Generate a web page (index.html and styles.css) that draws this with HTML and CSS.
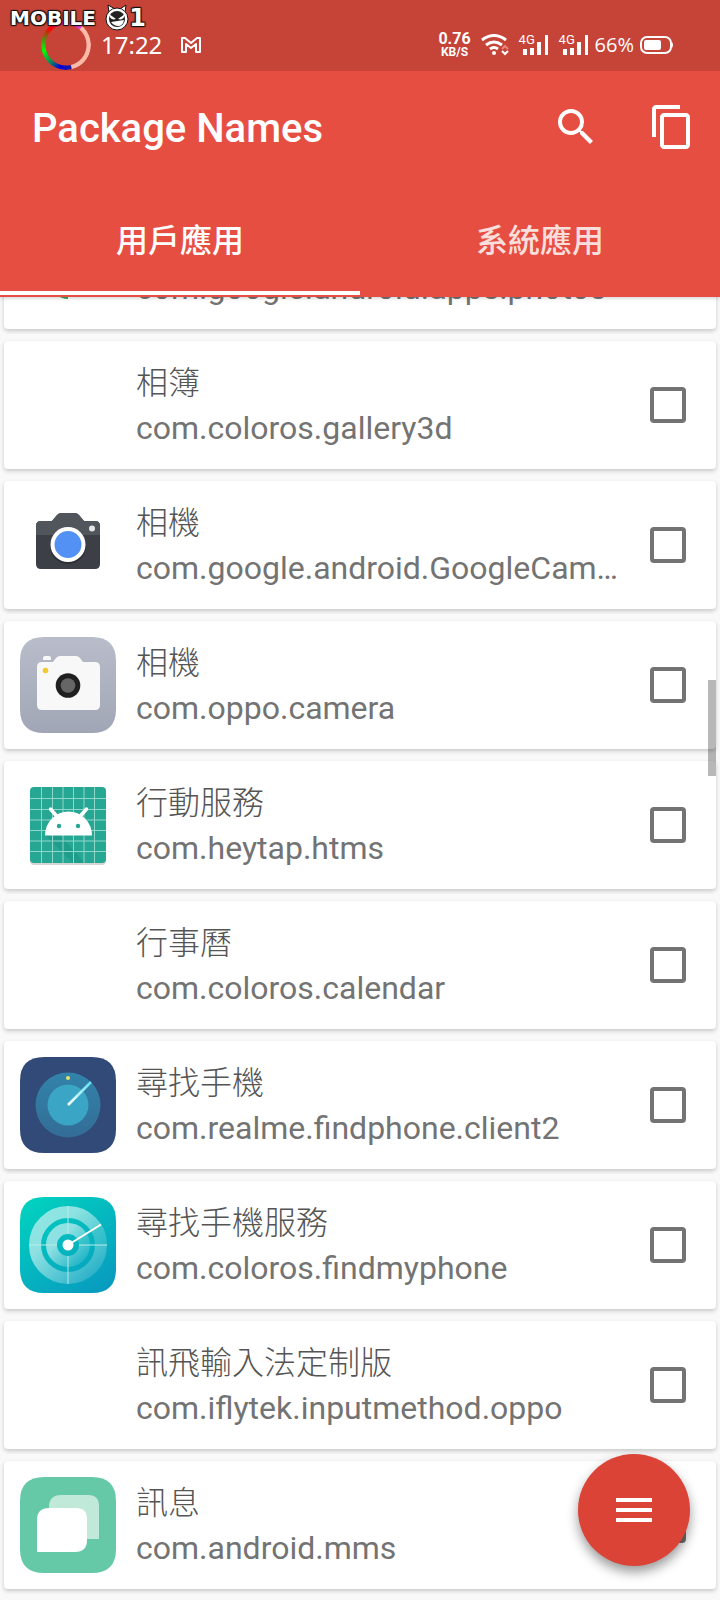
FILE: index.html
```html
<!DOCTYPE html>
<html lang="zh-Hant">
<head>
  <meta charset="UTF-8">
  <meta name="viewport" content="width=device-width, initial-scale=1">
  <title>Package Names</title>
  <link rel="stylesheet" href="styles.css">
</head>
<body>

  <header class="header">
    <div class="status">
      <span class="ring"></span>
      <span class="clock">17:22</span>
      <svg class="mail" width="22" height="18" viewBox="0 0 22 18" fill="none" stroke="#fff" stroke-width="2" stroke-linejoin="round">
        <path d="M2 2h3l6 5 6-5h3v14h-4V8l-5 4-5-4v8H2z"/>
      </svg>

      <div class="status-right">
        <div class="speed"><b>0.76</b><small>KB/S</small></div>
        <svg width="28" height="22" viewBox="0 0 28 22" fill="none" stroke="#fff" stroke-width="3">
          <path d="M1 6q12-9 24 0M5 11q8-6 16 0M9 15q4-3 8 0"/>
          <circle cx="13" cy="19" r="2" fill="#fff" stroke="none"/>
          <path d="M21 15l3-3 3 3" stroke="#e5857c" stroke-width="2"/>
          <path d="M21 17l3 3 3-3" stroke-width="2"/>
        </svg>
        <div class="signal">
          <span>4G</span>
          <svg width="30" height="20" viewBox="0 0 30 20" fill="#fff">
            <path d="M4 14h4v6H4zM11 13h4v7h-4zM18 7h4v13h-4zM26 0h3v20h-3z"/>
          </svg>
        </div>
        <div class="signal">
          <span>4G</span>
          <svg width="30" height="20" viewBox="0 0 30 20" fill="#fff">
            <path d="M4 14h4v6H4zM11 13h4v7h-4zM18 7h4v13h-4zM26 0h3v20h-3z"/>
          </svg>
        </div>
        <div class="battery">
          <span>66%</span>
          <svg width="34" height="20" viewBox="0 0 34 20">
            <rect x="1" y="2" width="30" height="16" rx="6" fill="none" stroke="#fff" stroke-width="2"/>
            <rect x="4" y="5" width="17" height="10" rx="2" fill="#fff"/>
            <path d="M32 7q2 3 0 6z" fill="#fff"/>
          </svg>
        </div>
      </div>

      <div class="watermark">
        <span class="brand">MOBILE</span>
        <svg width="24" height="28" viewBox="0 0 24 28">
          <path d="M4 9L3 1l7 4h5l6-4-1 8z" fill="#fff" stroke="#111" stroke-width="1"/>
          <circle cx="12" cy="15" r="11" fill="#fff" stroke="#111" stroke-width="1"/>
          <circle cx="12" cy="15" r="8" fill="#222"/>
          <path d="M4 10l7 5q-6 2-7-5zM20 10l-7 5q6 2 7-5zM6 18l13-2q-1 6-6 6-4 0-7-4z" fill="#fff"/>
        </svg>
        <span class="one">1</span>
      </div>
    </div>

    <div class="toolbar">
      <h1>Package Names</h1>
      <button type="button" aria-label="搜尋">
        <svg width="48" height="48" viewBox="0 0 24 24" fill="#fff">
          <path d="M15.5 14h-.79l-.28-.27A6.47 6.47 0 0 0 16 9.5 6.5 6.5 0 1 0 9.5 16c1.61 0 3.09-.59 4.23-1.57l.27.28v.79l5 4.99L20.49 19l-4.99-5zm-6 0C7.01 14 5 11.99 5 9.5S7.01 5 9.5 5 14 7.01 14 9.5 11.99 14 9.5 14z"/>
        </svg>
      </button>
      <button type="button" aria-label="複製">
        <svg width="48" height="48" viewBox="0 0 24 24" fill="#fff">
          <path d="M16 1H4c-1.1 0-2 .9-2 2v14h2V3h12V1zm3 4H8c-1.1 0-2 .9-2 2v14c0 1.1.9 2 2 2h11c1.1 0 2-.9 2-2V7c0-1.1-.9-2-2-2zm0 16H8V7h11v14z"/>
        </svg>
      </button>
    </div>

    <nav class="tabs">
      <button type="button" class="tab active">用戶應用</button>
      <button type="button" class="tab">系統應用</button>
    </nav>
  </header>

  <main class="list">
    <label class="card">
      <svg class="icon" viewBox="0 0 96 96">
        <path d="M48 48V14a17 17 0 0 1 0 34z" fill="#ea4335"/>
        <path d="M48 48h34a17 17 0 0 1-34 0z" fill="#4285f4"/>
        <path d="M48 48v34a17 17 0 0 1 0-34z" fill="#34a853"/>
        <path d="M48 48H14a17 17 0 0 1 34 0z" fill="#fbbc04"/>
      </svg>
      <span class="info">
        <span class="name"></span>
        <span class="package">com.google.android.apps.photos</span>
      </span>
      <input type="checkbox">
    </label>

    <label class="card">
      <span class="icon"></span>
      <span class="info">
        <span class="name">相簿</span>
        <span class="package">com.coloros.gallery3d</span>
      </span>
      <input type="checkbox">
    </label>

    <label class="card">
      <svg class="icon" viewBox="0 0 96 96">
        <path d="M21 24h11l5-6q2-2 4-2h14q2 0 4 2l5 6h11q5 0 5 5v38q0 5-5 5H21q-5 0-5-5V29q0-5 5-5z" fill="#3c4046"/>
        <path d="M21 24h11l5-6q2-2 4-2h14q2 0 4 2l5 6h11q5 0 5 5v9H16v-9q0-5 5-5z" fill="#51565d"/>
        <circle cx="48" cy="49" r="18" fill="#2c2f34"/>
        <circle cx="48" cy="47.500" r="17.500" fill="#fff"/>
        <circle cx="48" cy="47.500" r="13.500" fill="#5491f5"/>
        <circle cx="72" cy="31.500" r="3" fill="#e4e6e8"/>
      </svg>
      <span class="info">
        <span class="name">相機</span>
        <span class="package">com.google.android.GoogleCamera</span>
      </span>
      <input type="checkbox">
    </label>

    <label class="card">
      <svg class="icon" viewBox="0 0 96 96">
        <defs>
          <linearGradient id="grey" x1="0" y1="0" x2="0" y2="1">
            <stop offset="0" stop-color="#b9bdca"/>
            <stop offset="1" stop-color="#a1a6b6"/>
          </linearGradient>
        </defs>
        <path d="M24 0h48q24 0 24 24v48q0 24-24 24H24Q0 96 0 72V24Q0 0 24 0z" fill="url(#grey)"/>
        <path d="M23 23v-2q0-2 2-2h4q2 0 2 2v2z" fill="#f8f8f8"/>
        <path d="M22 25h11l3-4q2-2 4-2h16q2 0 4 2l3 4h12q5 0 5 5v38q0 5-5 5H22q-5 0-5-5V30q0-5 5-5z" fill="#f8f8f8"/>
        <circle cx="25.500" cy="33.500" r="2.800" fill="#f2c92f"/>
        <circle cx="48" cy="48.500" r="12.300" fill="#202020"/>
        <circle cx="48" cy="48.500" r="7.300" fill="#666"/>
      </svg>
      <span class="info">
        <span class="name">相機</span>
        <span class="package">com.oppo.camera</span>
      </span>
      <input type="checkbox">
    </label>

    <label class="card">
      <svg class="icon" viewBox="0 0 96 96">
        <rect x="10" y="12" width="76" height="76" rx="4" fill="#d5d5d5"/>
        <rect x="10" y="10" width="76" height="76" rx="4" fill="#26a794"/>
        <path d="M25 58l28 28h12L40 58z" fill="#1f9c8a"/>
        <path d="M21.500 10v76M32.500 10v76M43 10v76M53.500 10v76M64 10v76M74.500 10v76M10 21.500h76M10 32.500h76M10 43h76M10 53.500h76M10 64h76M10 74.500h76" stroke="#8fd6cb" stroke-width="1"/>
        <path d="M30.500 32l7 8M66.500 32l-7 8" stroke="#fff" stroke-width="3.500" stroke-linecap="round"/>
        <path d="M25 58.500a23.500 24 0 0 1 47 0z" fill="#fff"/>
        <circle cx="39" cy="49" r="2.200" fill="#26a794"/>
        <circle cx="58" cy="49" r="2.200" fill="#26a794"/>
      </svg>
      <span class="info">
        <span class="name">行動服務</span>
        <span class="package">com.heytap.htms</span>
      </span>
      <input type="checkbox">
    </label>

    <label class="card">
      <span class="icon"></span>
      <span class="info">
        <span class="name">行事曆</span>
        <span class="package">com.coloros.calendar</span>
      </span>
      <input type="checkbox">
    </label>

    <label class="card">
      <svg class="icon" viewBox="0 0 96 96">
        <defs>
          <linearGradient id="radarOuter" x1="0" y1="0" x2="0" y2="1">
            <stop offset="0" stop-color="#3283aa"/>
            <stop offset="1" stop-color="#336d96"/>
          </linearGradient>
          <linearGradient id="beam" x1="0" y1="1" x2="1" y2="0">
            <stop offset="0" stop-color="#fff"/>
            <stop offset="1" stop-color="#5fe0f5"/>
          </linearGradient>
        </defs>
        <path d="M24 0h48q24 0 24 24v48q0 24-24 24H24Q0 96 0 72V24Q0 0 24 0z" fill="#324a78"/>
        <circle cx="48" cy="48" r="32.500" fill="url(#radarOuter)"/>
        <circle cx="48" cy="48" r="20.500" fill="#3ba5c6"/>
        <circle cx="48" cy="21" r="2" fill="#e5e36a"/>
        <path d="M48 48L71 25" stroke="url(#beam)" stroke-width="2.500"/>
      </svg>
      <span class="info">
        <span class="name">尋找手機</span>
        <span class="package">com.realme.findphone.client2</span>
      </span>
      <input type="checkbox">
    </label>

    <label class="card">
      <svg class="icon" viewBox="0 0 96 96">
        <defs>
          <linearGradient id="teal" x1="0.200" y1="0" x2="0.900" y2="1">
            <stop offset="0" stop-color="#02d0bf"/>
            <stop offset="1" stop-color="#0899bf"/>
          </linearGradient>
          <linearGradient id="sweep" x1="0" y1="0" x2="1" y2="1">
            <stop offset="0.300" stop-color="#fff" stop-opacity="0.550"/>
            <stop offset="1" stop-color="#fff" stop-opacity="0.100"/>
          </linearGradient>
        </defs>
        <path d="M24 0h48q24 0 24 24v48q0 24-24 24H24Q0 96 0 72V24Q0 0 24 0z" fill="url(#teal)"/>
        <circle cx="48" cy="48" r="33" fill="none" stroke="url(#sweep)" stroke-width="12"/>
        <circle cx="48" cy="48" r="16.500" fill="none" stroke="url(#sweep)" stroke-width="11"/>
        <path d="M48 48L81 28A39 39 0 0 1 87 48z" fill="#0fb6bd" opacity="0.400"/>
        <path d="M48 9v28M48 59v28M9 48h28M59 48h28" stroke="#b5ece9" stroke-width="1"/>
        <path d="M48 48L81 27.500" stroke="#fff" stroke-width="2"/>
        <circle cx="48" cy="48" r="5.500" fill="#fff"/>
      </svg>
      <span class="info">
        <span class="name">尋找手機服務</span>
        <span class="package">com.coloros.findmyphone</span>
      </span>
      <input type="checkbox">
    </label>

    <label class="card">
      <span class="icon"></span>
      <span class="info">
        <span class="name">訊飛輸入法定制版</span>
        <span class="package">com.iflytek.inputmethod.oppo</span>
      </span>
      <input type="checkbox">
    </label>

    <label class="card">
      <svg class="icon" viewBox="0 0 96 96">
        <path d="M24 0h48q24 0 24 24v48q0 24-24 24H24Q0 96 0 72V24Q0 0 24 0z" fill="#65c9a8"/>
        <path d="M41 18h27q11 0 11 11v33H40q-11 0-11-11V30q0-12 12-12z" fill="#c0e9da"/>
        <path d="M29 31h27q11 0 11 11v21q0 12-12 12H17V43q0-12 12-12z" fill="#fff"/>
      </svg>
      <span class="info">
        <span class="name">訊息</span>
        <span class="package">com.android.mms</span>
      </span>
      <input type="checkbox">
    </label>
  </main>

  <div class="scroll-thumb"></div>

  <button type="button" class="fab" aria-label="選單">
    <svg width="36" height="26" viewBox="0 0 36 26" fill="#fff">
      <path d="M0 1h36v4H0zM0 11h36v4H0zM0 21h36v4H0z"/>
    </svg>
  </button>

</body>
</html>
```
FILE: styles.css
```css
* {
  box-sizing: border-box;
}
body {
  margin: 0;
  background-color: #f9f9f9;
  font-family: Roboto, "Noto Sans CJK TC", sans-serif;
}
button {
  padding: 0;
  border: none;
  background: none;
  font-family: inherit;
  cursor: pointer;
}
svg {
  display: block;
  flex: none;
}

/* header */
.header {
  position: sticky;
  top: 0;
  z-index: 2;
  background-color: #e74e42;
  color: white;
  box-shadow: 0 1px 4px rgba(0,0,0,0.2);
}
.status {
  position: relative;
  display: flex;
  align-items: center;
  height: 71px;
  padding: 19px 46px 0 41px;
  background-color: #c64337;
}
.ring {
  width: 50px;
  height: 50px;
  border-radius: 50%;
  background: conic-gradient(#f0f 0deg, #e93fd0 40deg, #fbb9a8 42deg, #fbb9a8 165deg, #1a1aa8 168deg, #0000e0 195deg, #0a8060 220deg, #0f0 255deg, #5a8a10 285deg, #f00 315deg, #e0105a 340deg, #f0f 360deg);
  -webkit-mask: radial-gradient(circle, transparent 20px, #000 21px);
  mask: radial-gradient(circle, transparent 20px, #000 21px);
}
.clock {
  margin-left: 10px;
  font-family: "Noto Sans", sans-serif;
  font-size: 24px;
  line-height: 30px;
}
.mail {
  margin-left: 18px;
}
.status-right {
  display: flex;
  align-items: center;
  gap: 10px;
  margin-left: auto;
}
.speed {
  display: flex;
  flex-direction: column;
  align-items: center;
  font-size: 16px;
  line-height: 14px;
}
.speed small {
  font-size: 12px;
  line-height: 12px;
  font-weight: bold;
}
.signal {
  position: relative;
}
.signal span {
  position: absolute;
  top: -2px;
  left: 0;
  font-size: 13px;
  line-height: 14px;
}
.battery {
  display: flex;
  align-items: center;
  gap: 6px;
  margin-left: -4px;
  font-family: "Open Sans", sans-serif;
  font-size: 20px;
  line-height: 24px;
}
.watermark {
  position: absolute;
  top: 4px;
  left: 10px;
  display: flex;
  align-items: center;
  width: 136px;
  font-family: "DejaVu Sans", sans-serif;
  font-weight: bold;
  line-height: 28px;
  text-shadow: 1px 1px 1px #111, -1px -1px 1px #111, 1px -1px 1px #111, -1px 1px 1px #111;
}
.brand {
  flex: 1;
  font-size: 20px;
}
.one {
  font-size: 24px;
}
.toolbar {
  display: flex;
  align-items: center;
  gap: 48px;
  height: 112px;
  padding: 0 24px 0 32px;
}
h1 {
  flex: 1;
  margin: 0;
  padding-top: 4px;
  font-size: 40px;
  line-height: 48px;
  font-weight: 500;
}

/* tabs */
.tabs {
  display: flex;
  padding-bottom: 2px;
}
.tab {
  flex: 1;
  height: 112px;
  padding-top: 4px;
  border-bottom: 4px solid transparent;
  border-top: 4px solid transparent;
  color: #f9dfdc;
  font-size: 32px;
  line-height: 48px;
  font-weight: 500;
}
.tab.active {
  color: white;
  border-bottom-color: white;
}

/* list, already scrolled a little under the header */
.list {
  display: flex;
  flex-direction: column;
  gap: 12px;
  margin-top: -96px;
  padding: 0 4px 11px;
}
.card {
  display: flex;
  align-items: center;
  gap: 20px;
  padding: 16px 30px 16px 16px;
  background: white;
  border-radius: 4px;
  box-shadow: 0 2px 4px rgba(0,0,0,0.2);
}
.icon {
  flex: none;
  width: 96px;
  height: 96px;
}
.info {
  flex: 1;
  min-width: 0;
  color: #737373;
  font-size: 32px;
  line-height: 46px;
}
.name, .package {
  display: block;
  height: 46px;
  white-space: nowrap;
  overflow: hidden;
  text-overflow: ellipsis;
}
.name {
  color: #555;
  font-family: "Noto Sans CJK TC", sans-serif;
  font-weight: 300;
  line-height: 42px;
}
input[type="checkbox"] {
  flex: none;
  appearance: none;
  width: 36px;
  height: 36px;
  margin: 0;
  border: 4px solid #737373;
  border-radius: 4px;
}
input[type="checkbox"]:checked {
  background: #db4336;
}

.scroll-thumb {
  position: fixed;
  top: 680px;
  right: 4px;
  width: 8px;
  height: 96px;
  background: rgba(0,0,0,0.28);
}
.fab {
  position: fixed;
  right: 30px;
  bottom: 34px;
  display: flex;
  align-items: center;
  justify-content: center;
  width: 112px;
  height: 112px;
  border-radius: 50%;
  background-color: #db4336;
  box-shadow: 0 6px 12px rgba(0,0,0,0.4);
}
```
